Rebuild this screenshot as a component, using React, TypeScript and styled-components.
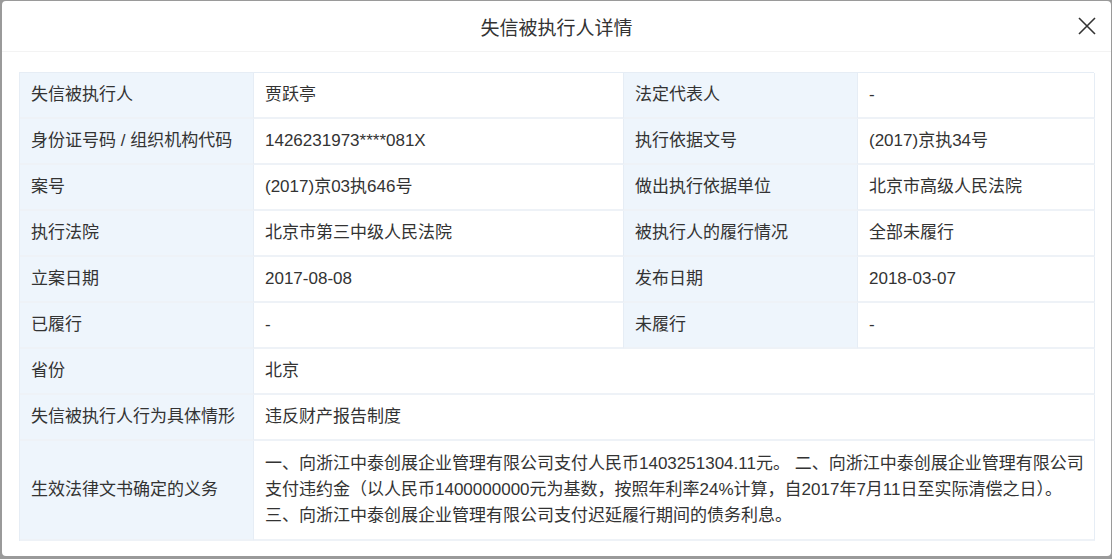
import React from "react";
import styled, { createGlobalStyle } from "styled-components";

const G = createGlobalStyle`
  html,body{margin:0;padding:0;background:#9a9a9a;}
  body{font-family:"Microsoft YaHei","Liberation Sans","Noto Sans CJK SC",sans-serif;}
`;
const Modal = styled.div`
  margin:1px 1px 0 2px;height:555px;background:#fff;border-radius:4px;box-sizing:border-box;
  display:flex;flex-direction:column;
`;
const Header = styled.div`
  height:50px;border-bottom:1px solid #f3f3f3;display:flex;align-items:center;justify-content:center;position:relative;
  font-size:19px;color:#333;
`;
const Close = styled.svg`position:absolute;right:14px;top:15px;`;
const Body = styled.div`padding:20px 17px 0 17px;`;
const Table = styled.div`
  display:grid;grid-template-columns:234px 370px 234px 237px;
  border-top:1px solid #e6edf5;border-left:1px solid #e6edf5;font-size:17px;color:#333;
`;
const Cell = styled.div<{ $label?: boolean; $span?: number; $h?: number }>`
  grid-column:span ${p => p.$span || 1};
  background:${p => (p.$label ? "#eef5fc" : "#fff")};
  border-right:1px solid #e6edf5;border-bottom:2px solid #eef2f7;
  min-height:${p => p.$h || 46}px;box-sizing:border-box;
  padding:${p => (p.$h ? "10px 10px 10px 11px" : "0 11px")};display:flex;align-items:center;line-height:26px;
`;
const rows: [string, string, string, string][] = [
  ["失信被执行人", "贾跃亭", "法定代表人", "-"],
  ["身份证号码 / 组织机构代码", "1426231973****081X", "执行依据文号", "(2017)京执34号"],
  ["案号", "(2017)京03执646号", "做出执行依据单位", "北京市高级人民法院"],
  ["执行法院", "北京市第三中级人民法院", "被执行人的履行情况", "全部未履行"],
  ["立案日期", "2017-08-08", "发布日期", "2018-03-07"],
  ["已履行", "-", "未履行", "-"],
];
export default function App() {
  return (
    <>
      <G />
      <Modal>
        <Header>
          失信被执行人详情
          <Close width="20" height="20" viewBox="0 0 20 20"><path d="M2 2L18 18M18 2L2 18" stroke="#333" strokeWidth="1.6" /></Close>
        </Header>
        <Body>
          <Table>
            {rows.map((r, i) => (
              <React.Fragment key={i}>
                <Cell $label>{r[0]}</Cell><Cell>{r[1]}</Cell><Cell $label>{r[2]}</Cell><Cell>{r[3]}</Cell>
              </React.Fragment>
            ))}
            <Cell $label>省份</Cell><Cell $span={3}>北京</Cell>
            <Cell $label>失信被执行人行为具体情形</Cell><Cell $span={3}>违反财产报告制度</Cell>
            <Cell $label>生效法律文书确定的义务</Cell>
            <Cell $span={3} $h={100}>一、向浙江中泰创展企业管理有限公司支付人民币1403251304.11元。 二、向浙江中泰创展企业管理有限公司支付违约金（以人民币1400000000元为基数，按照年利率24%计算，自2017年7月11日至实际清偿之日）。 三、向浙江中泰创展企业管理有限公司支付迟延履行期间的债务利息。</Cell>
          </Table>
        </Body>
      </Modal>
    </>
  );
}
